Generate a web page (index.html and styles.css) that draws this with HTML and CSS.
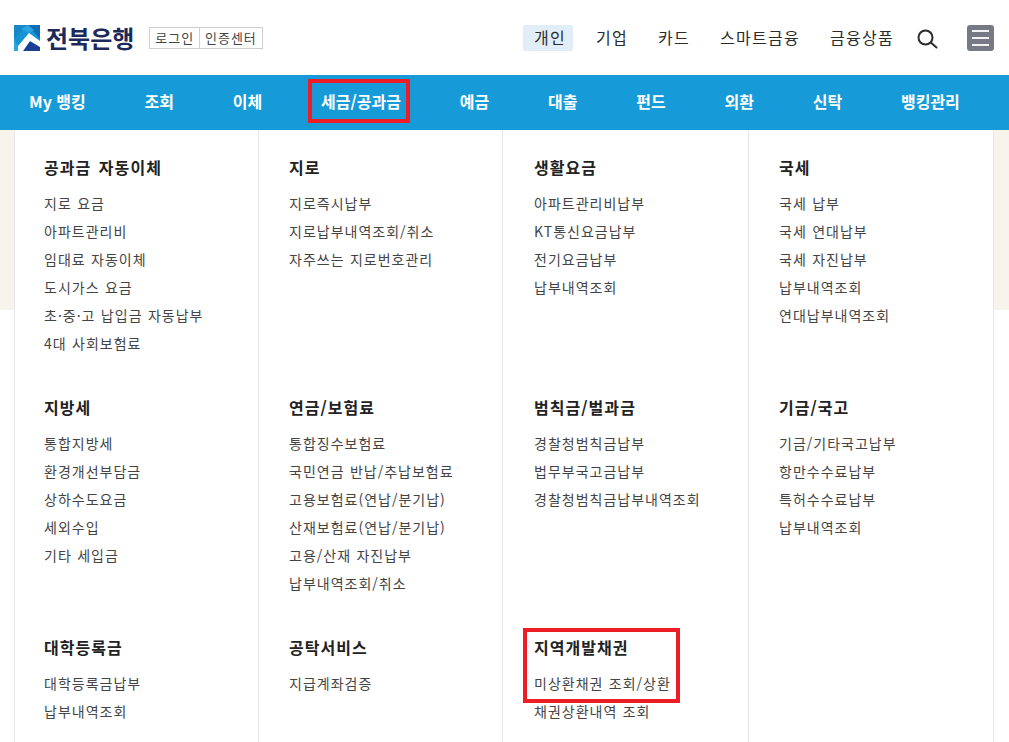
FILE: index.html
```html
<!DOCTYPE html>
<html lang="ko">
<head>
<meta charset="utf-8">
<title>전북은행</title>
<link rel="stylesheet" href="styles.css">
</head>
<body>
<header class="top">
  <div class="brand">
    <svg class="logo" width="26" height="26" viewBox="0 0 26 26">
      <rect width="26" height="26" fill="#1494d4"/>
      <polygon points="0,0 14,0 0,14" fill="#1a86ca"/>
      <polygon points="14,0 26,0 26,14" fill="#0f6db5"/>
      <polygon points="7,4 14,0 20,5 15,8" fill="#2aa3de"/>
      <polygon points="0,14 4,21 4,26 0,26" fill="#2ba6e0"/>
      <polygon points="9,26 16,16 26,22 26,26" fill="#1c3f94"/>
      <polygon points="4,21 15,8 26,16 26,22 16,16 9,26 4,26" fill="#fff"/>
    </svg>
    <span class="brand-name">전북은행</span>
    <div class="auth"><a class="auth-item">로그인</a><a class="auth-item">인증센터</a></div>
  </div>
  <nav class="segments">
    <a class="seg seg-on">개인</a>
    <a class="seg">기업</a>
    <a class="seg">카드</a>
    <a class="seg">스마트금융</a>
    <a class="seg">금융상품</a>
  </nav>
  <svg class="search" width="22" height="22" viewBox="0 0 22 22" fill="none" stroke="#2b2b2b" stroke-width="2">
    <circle cx="8.5" cy="10.5" r="7"/>
    <path d="M13.8 15.5l5.7 5" stroke-linecap="round"/>
  </svg>
  <button class="menu-btn" aria-label="메뉴"><i></i><i></i><i></i></button>
</header>

<nav class="gnb">
  <a class="gnb-item">My 뱅킹</a>
  <a class="gnb-item">조회</a>
  <a class="gnb-item">이체</a>
  <a class="gnb-item gnb-marked">세금/공과금</a>
  <a class="gnb-item">예금</a>
  <a class="gnb-item">대출</a>
  <a class="gnb-item">펀드</a>
  <a class="gnb-item">외환</a>
  <a class="gnb-item">신탁</a>
  <a class="gnb-item">뱅킹관리</a>
</nav>

<main class="stage">
  <div class="panel">
    <section class="cell c1"><h3>공과금 자동이체</h3><ul><li>지로 요금</li><li>아파트관리비</li><li>임대료 자동이체</li><li>도시가스 요금</li><li>초·중·고 납입금 자동납부</li><li>4대 사회보험료</li></ul></section>
    <section class="cell c2"><h3>지로</h3><ul><li>지로즉시납부</li><li>지로납부내역조회/취소</li><li>자주쓰는 지로번호관리</li></ul></section>
    <section class="cell c3"><h3>생활요금</h3><ul><li>아파트관리비납부</li><li>KT통신요금납부</li><li>전기요금납부</li><li>납부내역조회</li></ul></section>
    <section class="cell c4"><h3>국세</h3><ul><li>국세 납부</li><li>국세 연대납부</li><li>국세 자진납부</li><li>납부내역조회</li><li>연대납부내역조회</li></ul></section>

    <section class="cell c1"><h3>지방세</h3><ul><li>통합지방세</li><li>환경개선부담금</li><li>상하수도요금</li><li>세외수입</li><li>기타 세입금</li></ul></section>
    <section class="cell c2"><h3>연금/보험료</h3><ul><li>통합징수보험료</li><li>국민연금 반납/추납보험료</li><li>고용보험료(연납/분기납)</li><li>산재보험료(연납/분기납)</li><li>고용/산재 자진납부</li><li>납부내역조회/취소</li></ul></section>
    <section class="cell c3"><h3>범칙금/벌과금</h3><ul><li>경찰청범칙금납부</li><li>법무부국고금납부</li><li>경찰청범칙금납부내역조회</li></ul></section>
    <section class="cell c4"><h3>기금/국고</h3><ul><li>기금/기타국고납부</li><li>항만수수료납부</li><li>특허수수료납부</li><li>납부내역조회</li></ul></section>

    <section class="cell c1"><h3>대학등록금</h3><ul><li>대학등록금납부</li><li>납부내역조회</li></ul></section>
    <section class="cell c2"><h3>공탁서비스</h3><ul><li>지급계좌검증</li></ul></section>
    <section class="cell c3 cell-marked"><h3>지역개발채권</h3><ul><li>미상환채권 조회/상환</li><li>채권상환내역 조회</li></ul><span class="mark-box"></span></section>
    <section class="cell c4"></section>
  </div>
</main>
</body>
</html>
```
FILE: styles.css
```css
* { box-sizing: border-box; }
html, body { margin: 0; padding: 0; overflow: hidden; }
body {
  width: 1009px;
  height: 742px;
  background: #fff;
  font-family: "Noto Sans CJK KR", "Liberation Sans", sans-serif;
  color: #333;
}
h3, ul { margin: 0; padding: 0; }
ul { list-style: none; }

.top {
  height: 75px;
  display: flex;
  align-items: center;
  padding: 0 15px 0 14px;
}
.brand { display: flex; align-items: center; }
.logo { display: block; }
.brand-name {
  margin-left: 6px;
  font-size: 24px;
  font-weight: 700;
  line-height: 26px;
  color: #1b2a5a;
}
.auth {
  display: flex;
  margin-left: 15px;
  height: 22px;
  border: 1px solid #cfcfcf;
}
.auth-item {
  font-size: 13px;
  line-height: 20px;
  padding: 0 5px;
  color: #444;
  letter-spacing: 0.95px;
}
.auth-item + .auth-item { border-left: 1px solid #cfcfcf; }

.segments { display: flex; margin-left: auto; align-items: center; }
.seg {
  font-size: 16px;
  letter-spacing: 1.28px;
  line-height: 24px;
  height: 26px;
  padding: 0 7px 0 11px;
  margin-right: 12px;
  color: #2b2b2b;
  white-space: nowrap;
}
.seg:last-child { margin-right: 0; }
.seg-on { background: #e1eef8; border-radius: 2px; }
.search { margin: 0 28px 0 16px; display: block; }
.menu-btn {
  width: 27px;
  height: 26px;
  padding: 5px;
  border: 0;
  border-radius: 3px;
  background: #777a85;
  display: flex;
  flex-direction: column;
  justify-content: space-between;
}
.menu-btn i { display: block; height: 2px; background: #f2f2f2; }

.gnb {
  height: 55px;
  background: #169bd8;
  display: flex;
  gap: 58.8px;
  padding-left: 29px;
}
.gnb-item {
  position: relative;
  font-size: 16px;
  font-weight: 700;
  color: #fff;
  white-space: nowrap;
  line-height: 53px;
}
.gnb-marked::after {
  content: "";
  box-sizing: border-box;
  position: absolute;
  left: -13px;
  right: -9px;
  top: 4px;
  height: 44px;
  border: 4px solid #ee1c25;
}

.stage {
  height: 612px;
  background: linear-gradient(#f7f3ed 180px, #fff 180px);
  padding-left: 14px;
}
.panel {
  width: 980px;
  height: 612px;
  overflow: hidden;
  background: #fff;
  border-left: 1px solid #e6e6e6;
  border-right: 1px solid #e6e6e6;
  display: grid;
  grid-template-columns: 244px 244px 246px 245px;
  grid-auto-rows: 240px;
}
.cell {
  position: relative;
  padding: 26px 0 0 29px;
  border-right: 1px solid #e6e6e6;
}
.c2, .c4 { padding-left: 30px; }
.c3 { padding-left: 31px; }
.c4 { border-right: 0; }
.cell h3 {
  font-size: 16px;
  letter-spacing: 1.05px;
  word-spacing: 2px;
  font-weight: 700;
  line-height: 22px;
  color: #222;
  margin-bottom: 11px;
}
.cell li {
  font-size: 14px;
  letter-spacing: 1px;
  word-spacing: 0.5px;
  line-height: 28px;
  color: #444;
  white-space: nowrap;
}
.mark-box {
  position: absolute;
  left: 20px;
  top: 18px;
  width: 157px;
  height: 75px;
  border: 4px solid #ee1c25;
}
```
